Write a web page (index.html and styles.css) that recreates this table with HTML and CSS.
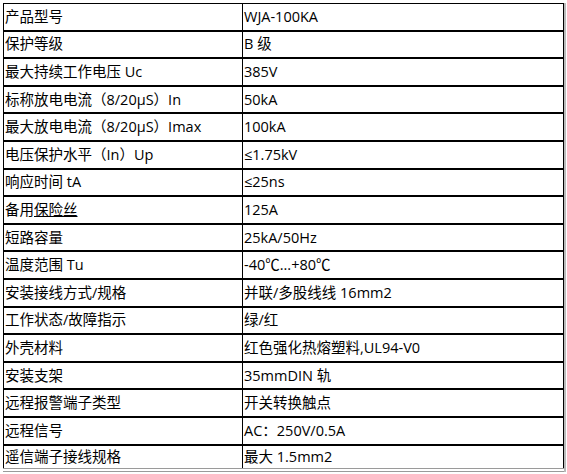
FILE: index.html
```html
<!DOCTYPE html>
<html>
<head>
<meta charset="utf-8">
<link rel="stylesheet" href="styles.css">
</head>
<body>
<div class="wrap">
<table class="spec">
<tr><td class="k">产品型号</td><td class="v">WJA-100KA</td></tr>
<tr><td class="k">保护等级</td><td class="v">B 级</td></tr>
<tr><td class="k">最大持续工作电压 Uc</td><td class="v">385V</td></tr>
<tr><td class="k">标称放电电流（8/20μS）In</td><td class="v">50kA</td></tr>
<tr><td class="k">最大放电电流（8/20μS）Imax</td><td class="v">100kA</td></tr>
<tr><td class="k">电压保护水平（In）Up</td><td class="v">≤1.75kV</td></tr>
<tr><td class="k">响应时间 tA</td><td class="v">≤25ns</td></tr>
<tr><td class="k">备用<span class="ul">保险丝</span></td><td class="v">125A</td></tr>
<tr><td class="k">短路容量</td><td class="v">25kA/50Hz</td></tr>
<tr><td class="k">温度范围 Tu</td><td class="v">-40℃...+80℃</td></tr>
<tr><td class="k">安装接线方式/规格</td><td class="v">并联/多股线线 16mm2</td></tr>
<tr><td class="k">工作状态/故障指示</td><td class="v">绿/红</td></tr>
<tr><td class="k">外壳材料</td><td class="v">红色强化热熔塑料,UL94-V0</td></tr>
<tr><td class="k">安装支架</td><td class="v">35mmDIN 轨</td></tr>
<tr><td class="k">远程报警端子类型</td><td class="v">开关转换触点</td></tr>
<tr><td class="k">远程信号</td><td class="v">AC：250V/0.5A</td></tr>
<tr class="last"><td class="k">遥信端子接线规格</td><td class="v">最大 1.5mm2</td></tr>
</table>
</div>
</body>
</html>
```
FILE: styles.css
```css
html, body {
  margin: 0;
  padding: 0;
  background: #fff;
}
.wrap {
  padding: 3px 0 0 3px;
}
.spec {
  border-collapse: collapse;
  width: 561px;
  table-layout: fixed;
  font-family: "Open Sans", "Noto Sans CJK SC", sans-serif;
  font-size: 14.5px;
  color: #000;
  border-top: 1px solid #000;
  border-bottom: 4px double #9a9a9a;
  box-shadow: 2px 0 0 -0px #bbb;
}
.spec td {
  height: 25.6px;
  padding: 0 0 0 1px;
  border-left: 1px solid #000;
  border-right: 1px solid #000;
  border-bottom: 2px solid #000;
  white-space: nowrap;
  line-height: 20px;
  vertical-align: middle;
}
.spec .k {
  width: 237px;
}
.spec tr.last td {
  border-bottom: none;
  height: 22px;
}
.ul {
  text-decoration: underline;
}
```
